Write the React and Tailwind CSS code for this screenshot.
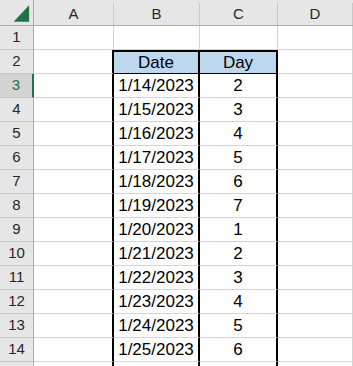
import React from 'react';

const rows = [
  ['1/14/2023', 2],
  ['1/15/2023', 3],
  ['1/16/2023', 4],
  ['1/17/2023', 5],
  ['1/18/2023', 6],
  ['1/19/2023', 7],
  ['1/20/2023', 1],
  ['1/21/2023', 2],
  ['1/22/2023', 3],
  ['1/23/2023', 4],
  ['1/24/2023', 5],
  ['1/25/2023', 6],
];

const ColHead = ({ label }) => (
  <div className="h-[26px] bg-[#e6e6e6] border-b border-[#ababab] pt-[3px]">
    <div className="h-full border-r border-[#c8c8c8] flex items-center justify-center text-[15px] text-[#262626]">
      {label}
    </div>
  </div>
);

const RowHead = ({ n, active }) =>
  active ? (
    <div className="h-[24px] bg-[#d2d2d2] border-b border-[#c6c6c6] border-r-2 border-r-[#217346] flex items-center justify-center text-[15px] text-[#217346]">
      {n}
    </div>
  ) : (
    <div className="h-[24px] bg-[#e6e6e6] border-b border-[#c6c6c6] border-r border-r-[#ababab] flex items-center justify-center text-[15px] text-[#262626]">
      {n}
    </div>
  );

const cell = 'h-[24px] border-b border-r border-[#d4d4d4] flex items-center justify-center text-[17px] text-black';
const edge = 'h-[24px] border-b border-[#d4d4d4] border-r-2 border-r-black flex items-center justify-center text-[17px] text-black';

export default function App() {
  return (
    <div
      className="w-[353px] h-[366px] overflow-hidden bg-white"
      style={{ fontFamily: '"Liberation Sans", Arial, sans-serif' }}
    >
      <div className="grid grid-cols-[34px_80px_86px_78px_75px]">
        {/* corner + column letters */}
        <div className="h-[26px] bg-[#e6e6e6] border-b border-r border-[#ababab] flex items-end justify-end">
          <svg width="34" height="26" viewBox="0 0 34 26">
            <polygon points="30,6 30,23 14,23" fill="#217346" />
          </svg>
        </div>
        <ColHead label="A" />
        <ColHead label="B" />
        <ColHead label="C" />
        <ColHead label="D" />

        {/* row 1 */}
        <RowHead n={1} />
        <div className={cell} />
        <div className={cell} />
        <div className={cell} />
        <div className={cell} />

        {/* row 2, table header */}
        <RowHead n={2} />
        <div className={edge} />
        <div className="h-[24px] bg-[#bdd7ee] border-t-2 border-t-black border-b border-b-black border-r-2 border-r-black flex items-center justify-center text-[17px] text-black">
          Date
        </div>
        <div className="h-[24px] bg-[#bdd7ee] border-t-2 border-t-black border-b border-b-black border-r-2 border-r-black flex items-center justify-center text-[17px] text-black">
          Day
        </div>
        <div className={cell} />

        {rows.map(([date, day], i) => (
          <React.Fragment key={date}>
            <RowHead n={i + 3} active={i === 0} />
            <div className={edge} />
            <div className={edge}>{date}</div>
            <div className={edge}>{day}</div>
            <div className={cell} />
          </React.Fragment>
        ))}

        {/* row 15, only its top edge shows */}
        <div className="h-[24px] bg-[#e6e6e6] border-r border-[#ababab]" />
        <div className={edge} />
        <div className={edge} />
        <div className={edge} />
        <div className={cell} />
      </div>
    </div>
  );
}
